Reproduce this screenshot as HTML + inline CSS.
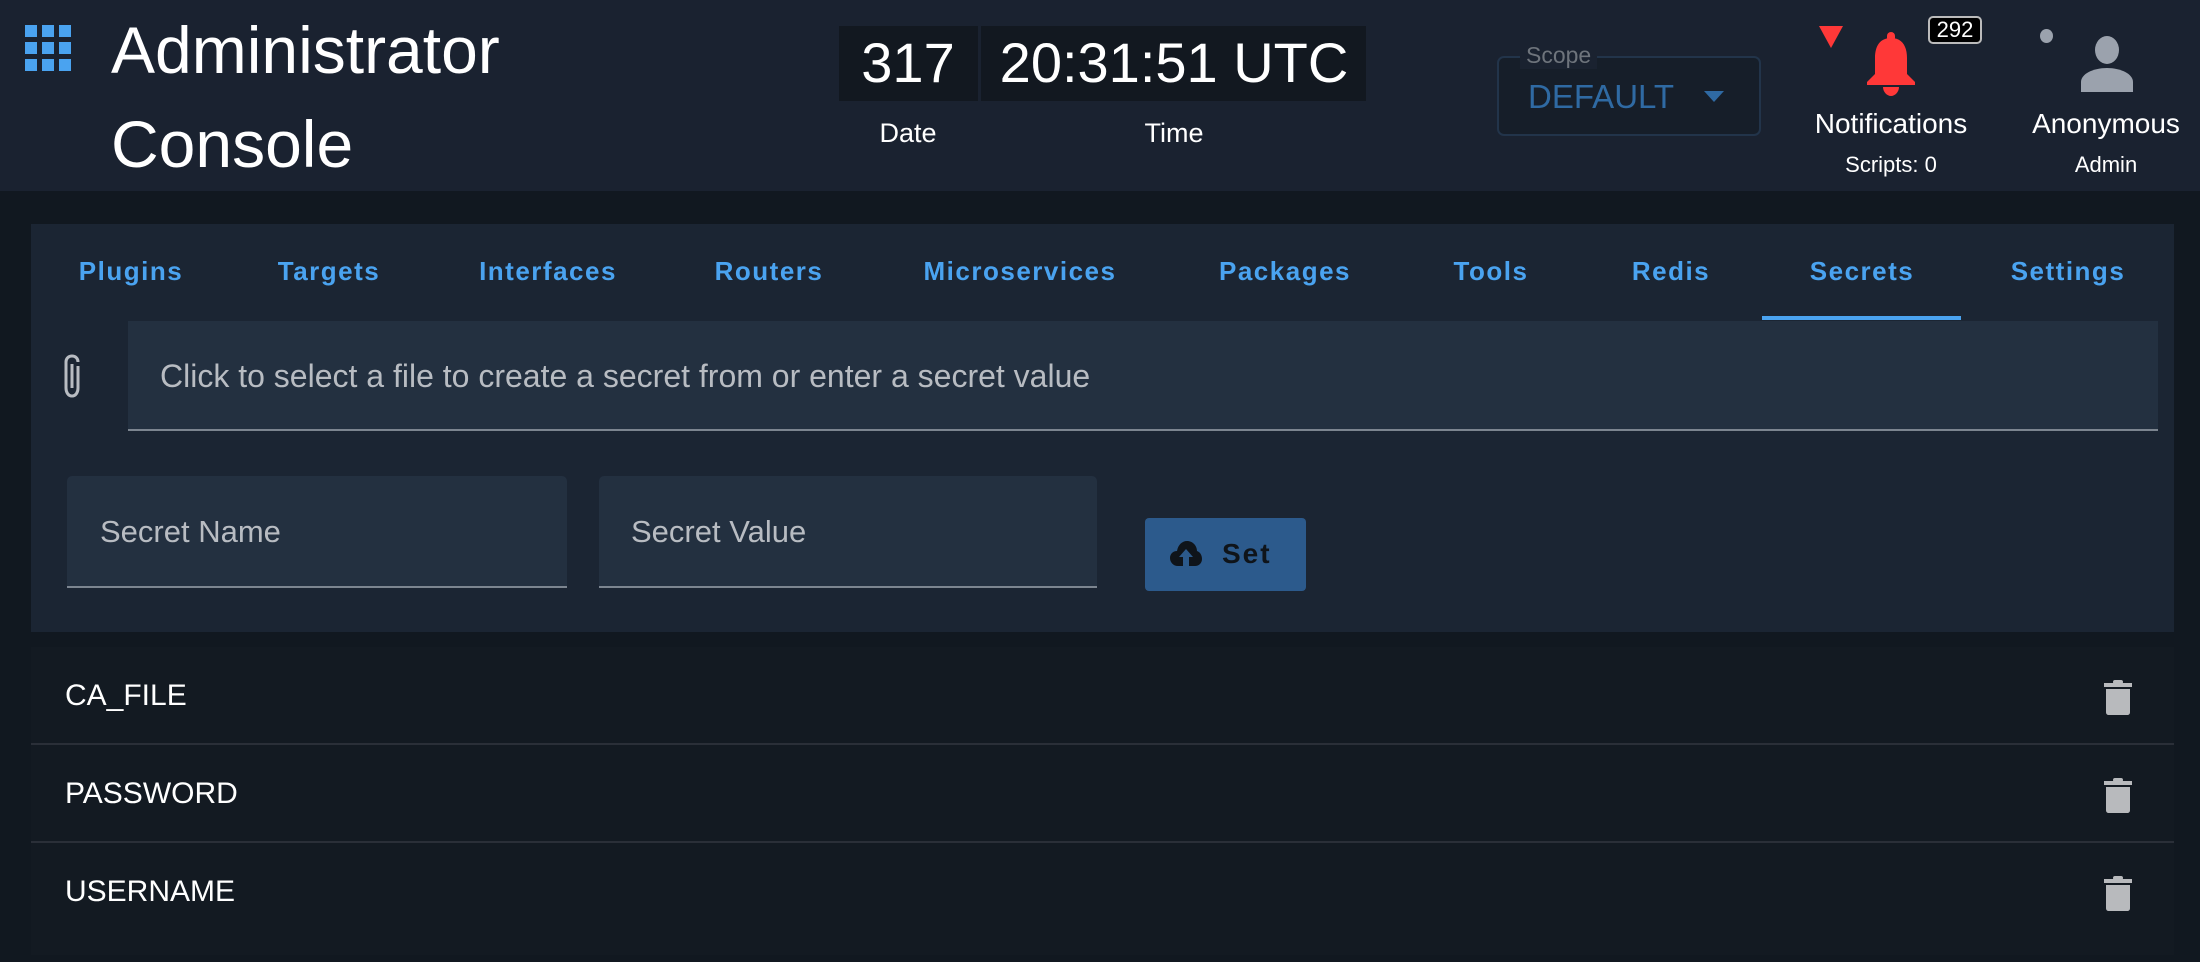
<!DOCTYPE html>
<html><head><meta charset="utf-8">
<style>
*{margin:0;padding:0;box-sizing:border-box}
body{width:2200px;height:962px;background:#111820;font-family:"Liberation Sans",sans-serif;position:relative;overflow:hidden;color:#fff}
.a{position:absolute}
.c{transform:translateX(-50%);white-space:nowrap}
.tab{position:absolute;top:256px;font-size:26px;font-weight:bold;color:#4aa3f0;letter-spacing:1.5px;transform:translateX(-50%);white-space:nowrap}
.row{position:absolute;left:31px;width:2143px;height:98px;background:#131a22;border-bottom:2px solid #2a2f38}
.row span{position:absolute;left:34px;top:32px;font-size:30px;color:#fff}
.row svg{position:absolute;left:2073px;top:31px}
</style></head><body>
<div class="a" style="left:0;top:0;width:2200px;height:191px;background:#1a2230"></div>
<svg class="a" style="left:25px;top:25px" width="46" height="46" viewBox="0 0 46 46" fill="#4aa3f0">
<rect x="0" y="0" width="12" height="12"/><rect x="17" y="0" width="12" height="12"/><rect x="34" y="0" width="12" height="12"/>
<rect x="0" y="17" width="12" height="12"/><rect x="17" y="17" width="12" height="12"/><rect x="34" y="17" width="12" height="12"/>
<rect x="0" y="34" width="12" height="12"/><rect x="17" y="34" width="12" height="12"/><rect x="34" y="34" width="12" height="12"/></svg>
<div class="a" style="left:111px;top:12px;font-size:66px;line-height:76px">Administrator</div>
<div class="a" style="left:111px;top:106px;font-size:66px;line-height:76px">Console</div>
<div class="a" style="left:839px;top:26px;width:139px;height:75px;background:#121820"></div>
<div class="a" style="left:981px;top:26px;width:385px;height:75px;background:#121820"></div>
<div class="a c" style="left:908px;top:30px;font-size:56px;line-height:66px">317</div>
<div class="a c" style="left:1174px;top:30px;font-size:56px;line-height:66px">20:31:51 UTC</div>
<div class="a c" style="left:908px;top:118px;font-size:27px">Date</div>
<div class="a c" style="left:1174px;top:118px;font-size:27px">Time</div>
<div class="a" style="left:1497px;top:56px;width:264px;height:80px;border:2px solid #22344a;border-radius:7px;background:#161e29"></div>
<div class="a" style="left:1520px;top:42px;padding:0 6px;background:#1a2230;font-size:23px;color:#6e747c">Scope</div>
<div class="a" style="left:1528px;top:78px;font-size:33px;color:#2f6aa3">DEFAULT</div>
<div class="a" style="left:1704px;top:91px;width:0;height:0;border-left:10px solid transparent;border-right:10px solid transparent;border-top:11px solid #2f6aa3"></div>
<div class="a" style="left:1819px;top:26px;width:0;height:0;border-left:12px solid transparent;border-right:12px solid transparent;border-top:22px solid #ff3838"></div>
<svg class="a" style="left:1865px;top:32px" width="52" height="66" viewBox="0 0 52 66" fill="#ff3838">
<rect x="22" y="0" width="8" height="10" rx="4"/><path d="M26 6C15 6 10 14 10 26V42L2 50V53H50V50L42 42V26C42 14 37 6 26 6Z"/><path d="M18 55H34C34 60 30 64 26 64C22 64 18 60 18 55Z"/></svg>
<div class="a" style="left:1928px;top:16px;width:54px;height:28px;border:2px solid #bbb;border-radius:5px;background:#000;font-size:22px;text-align:center;line-height:24px">292</div>
<div class="a c" style="left:1891px;top:108px;font-size:28px">Notifications</div>
<div class="a c" style="left:1891px;top:152px;font-size:22px">Scripts: 0</div>
<div class="a" style="left:2040px;top:29px;width:13px;height:14px;border-radius:50%;background:#9ba2ad"></div>
<svg class="a" style="left:2081px;top:36px" width="52" height="56" viewBox="0 0 52 56" fill="#9ba2ad">
<ellipse cx="26" cy="14" rx="12" ry="14"/><path d="M0 56V46C0 38 12 32 26 32C40 32 52 38 52 46V56Z"/></svg>
<div class="a c" style="left:2106px;top:108px;font-size:28px">Anonymous</div>
<div class="a c" style="left:2106px;top:152px;font-size:22px">Admin</div>

<div class="a" style="left:31px;top:224px;width:2143px;height:408px;background:#1b2533"></div>
<div class="tab" style="left:131px">Plugins</div>
<div class="tab" style="left:329px">Targets</div>
<div class="tab" style="left:548px">Interfaces</div>
<div class="tab" style="left:769px">Routers</div>
<div class="tab" style="left:1020px">Microservices</div>
<div class="tab" style="left:1285px">Packages</div>
<div class="tab" style="left:1491px">Tools</div>
<div class="tab" style="left:1671px">Redis</div>
<div class="tab" style="left:1862px">Secrets</div>
<div class="tab" style="left:2068px">Settings</div>
<div class="a" style="left:1762px;top:316px;width:199px;height:4px;background:#4aa3f0"></div>
<div class="a" style="left:128px;top:321px;width:2030px;height:110px;background:#233040;border-bottom:2px solid #7c8590"></div>
<svg class="a" style="left:60px;top:354px" width="26" height="46" viewBox="0 0 26 46" fill="none" stroke="#b8bcc2" stroke-width="3">
<path d="M18 12V34C18 38 16 42 12 42C8 42 6 38 6 34V8C6 4 9 2 12 2C15 2 18 4 18 8M12 10V34"/></svg>
<div class="a" style="left:160px;top:358px;font-size:32px;color:#b8bcc2">Click to select a file to create a secret from or enter a secret value</div>
<div class="a" style="left:67px;top:476px;width:500px;height:112px;background:#233040;border-bottom:2px solid #7c8590;border-radius:5px 5px 0 0"></div>
<div class="a" style="left:599px;top:476px;width:498px;height:112px;background:#233040;border-bottom:2px solid #7c8590;border-radius:5px 5px 0 0"></div>
<div class="a" style="left:100px;top:514px;font-size:31px;color:#b8bcc2">Secret Name</div>
<div class="a" style="left:631px;top:514px;font-size:31px;color:#b8bcc2">Secret Value</div>
<div class="a" style="left:1145px;top:518px;width:161px;height:73px;background:#2c5a8c;border-radius:4px"></div>
<svg class="a" style="left:1170px;top:540px" width="32" height="28" viewBox="0 0 32 28" fill="#0f141a">
<path d="M8 26C3 26 0 22 0 18C0 14 3 11 7 11C8 5 12 1 17 1C23 1 27 6 27 11C30 12 32 15 32 19C32 23 29 26 25 26H19V17H23L16 9L9 17H13V26Z"/></svg>
<div class="a" style="left:1222px;top:538px;font-size:28px;font-weight:bold;color:#0f141a;letter-spacing:2px">Set</div>

<div class="row" style="top:647px"><span>CA_FILE</span><svg width="32" height="40" viewBox="0 0 32 40" fill="#b8babd"><rect x="0" y="5" width="28" height="4"/><rect x="9" y="2" width="10" height="4" rx="2"/><path d="M2 11H26V34C26 36 25 37 23 37H5C3 37 2 36 2 34Z"/></svg></div>
<div class="row" style="top:745px"><span>PASSWORD</span><svg width="32" height="40" viewBox="0 0 32 40" fill="#b8babd"><rect x="0" y="5" width="28" height="4"/><rect x="9" y="2" width="10" height="4" rx="2"/><path d="M2 11H26V34C26 36 25 37 23 37H5C3 37 2 36 2 34Z"/></svg></div>
<div class="row" style="top:843px;height:112px;border:none"><span>USERNAME</span><svg width="32" height="40" viewBox="0 0 32 40" fill="#b8babd"><rect x="0" y="5" width="28" height="4"/><rect x="9" y="2" width="10" height="4" rx="2"/><path d="M2 11H26V34C26 36 25 37 23 37H5C3 37 2 36 2 34Z"/></svg></div>
</body></html>
